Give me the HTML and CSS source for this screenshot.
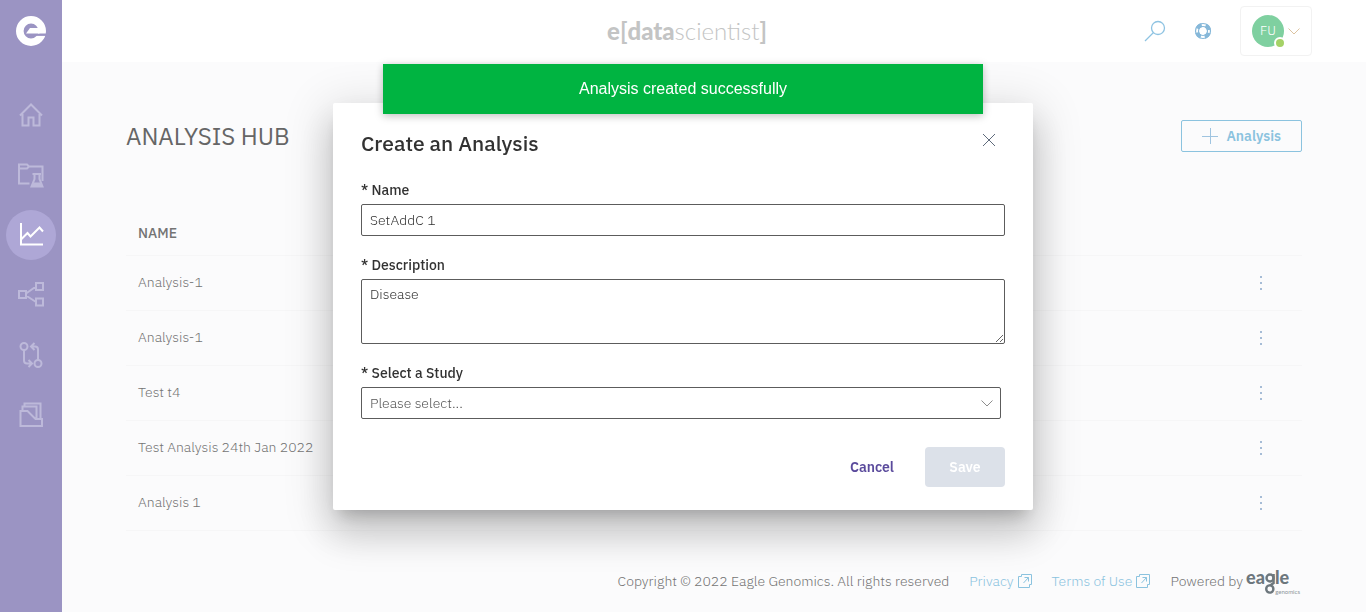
FILE: index.html
```html
<!DOCTYPE html>
<html lang="en">
<head>
<meta charset="utf-8">
<meta name="viewport" content="width=device-width, initial-scale=1">
<title>Analysis Hub</title>
<link rel="stylesheet" href="styles.css">
</head>
<body>
<div class="app">
  <nav class="sidebar" aria-label="Main">
    <a class="brand" href="#" aria-label="Home page">
      <svg width="30" height="30" viewBox="0 0 30 30"><circle cx="15" cy="15" r="11.2" fill="none" stroke="#fff" stroke-width="7.600"/><path d="M10 17.500h21v2.400H10z" fill="#9b94c3"/><path d="M14 12h9.500v5.600H10z" fill="#fff"/></svg>
    </a>
    <ul class="nav-list">
      <li><a class="nav-item" href="#" aria-label="Home"><svg width="26" height="26" viewBox="0 0 26 26"><path d="M2 13.500 13 2.500l11 11M4.500 12v11.500h6V15.500h5v8h6V12"/></svg></a></li>
      <li><a class="nav-item" href="#" aria-label="Studies"><svg width="26" height="26" viewBox="0 0 26 26"><path d="M11.500 21.500H1V2.500h8l2 2h13.500V19M1 6.500h8l2-2"/><path d="M14.500 12h8.500M16.500 12v5l-3 7.500h11l-3-7.500v-5"/><path d="M15.500 20.500h7l1.500 4H14z" fill="currentColor" stroke="none"/></svg></a></li>
      <li><a class="nav-item active" href="#" aria-label="Analyses" aria-current="page"><svg width="26" height="26" viewBox="0 0 26 26"><path d="M3 1v21.500h22M3.500 17l6-6 3 3.500 9-9 3.500 4"/></svg></a></li>
      <li><a class="nav-item" href="#" aria-label="Networks"><svg width="26" height="26" viewBox="0 0 26 26"><path d="M1 9h7v7H1zM18 1h7v7h-7zM18 16.500h7v7h-7zM8 11.500l10-7M8 13.500l10 6.500"/></svg></a></li>
      <li><a class="nav-item" href="#" aria-label="Workflows"><svg width="26" height="26" viewBox="0 0 26 26"><circle cx="6" cy="4.500" r="3.500"/><circle cx="20" cy="21.500" r="3.500"/><path d="M6 8v10.500q0 3 3 3h4M10.500 18l3.500 3.500-3.500 3.500M20 18V7.500q0-3-3-3h-4M16.500 1 13 4.500 16.500 8"/></svg></a></li>
      <li><a class="nav-item" href="#" aria-label="Files"><svg width="26" height="26" viewBox="0 0 26 26"><path d="M2.500 9h7l8 8H24v7H2.500zM4.500 9V4.500h14V17M6.500 4V1.500h16V17"/></svg></a></li>
    </ul>
  </nav>

  <div class="page">
    <header class="topbar">
      <p class="product"><b>e</b><span class="bracket">[</span><b>data</b>scientist<span class="bracket">]</span></p>
      <div class="tools">
        <button class="icon-btn" aria-label="Search"><svg width="22" height="22" viewBox="0 0 22 22" fill="none" stroke="#8ec3e2" stroke-width="1.300"><circle cx="14" cy="8" r="6.500"/><path d="M9.500 12.500 1 21"/></svg></button>
        <button class="icon-btn" aria-label="Help"><svg width="18" height="18" viewBox="0 0 18 18" fill="none"><circle cx="9" cy="9" r="6" stroke="#fff" stroke-width="3"/><circle cx="9" cy="9" r="6" stroke="#86b8d9" stroke-width="4" stroke-dasharray="5.400 4.025" stroke-dashoffset="-2"/><circle cx="9" cy="9" r="7.500" stroke="#86b8d9" stroke-width="1.200"/><circle cx="9" cy="9" r="4.500" stroke="#86b8d9" stroke-width="1.200"/></svg></button>
        <button class="account" aria-label="Account FU">
          <span class="avatar">FU<i class="status"></i></span>
          <svg width="12" height="7" viewBox="0 0 12 7" fill="none" stroke="#dcc3a0"><path d="M.5.500 6 6 11.500.500"/></svg>
        </button>
      </div>
    </header>

    <main class="content">
      <div class="title-row">
        <h1>ANALYSIS HUB</h1>
        <button class="add-btn"><svg width="16" height="16" viewBox="0 0 16 16" stroke="#9fc4e0"><path d="M8.500 0v16M0 8.500h16"/></svg>Analysis</button>
      </div>
      <table class="list">
        <thead><tr><th>NAME</th><th aria-label="Actions"></th></tr></thead>
        <tbody>
          <tr><td>Analysis-1</td><td><button class="more" aria-label="More actions"><i></i><i></i><i></i></button></td></tr>
          <tr><td>Analysis-1</td><td><button class="more" aria-label="More actions"><i></i><i></i><i></i></button></td></tr>
          <tr><td>Test t4</td><td><button class="more" aria-label="More actions"><i></i><i></i><i></i></button></td></tr>
          <tr><td>Test Analysis 24th Jan 2022</td><td><button class="more" aria-label="More actions"><i></i><i></i><i></i></button></td></tr>
          <tr><td>Analysis 1</td><td><button class="more" aria-label="More actions"><i></i><i></i><i></i></button></td></tr>
        </tbody>
      </table>
    </main>

    <footer class="footer">
      <span>Copyright © 2022 Eagle Genomics. All rights reserved</span>
      <a href="#">Privacy<svg width="14" height="14" viewBox="0 0 14 14"><path d="M3.500 2.500h-3v11h11v-3M3.500 2.500v-2h10v10h-2M5.500 9l5-5.500M6.500 3.500h4V7.500"/></svg></a>
      <a href="#">Terms of Use<svg width="14" height="14" viewBox="0 0 14 14"><path d="M3.500 2.500h-3v11h11v-3M3.500 2.500v-2h10v10h-2M5.500 9l5-5.500M6.500 3.500h4V7.500"/></svg></a>
      <span class="powered">Powered by <span class="eagle"><b>ea<svg class="eagle-g" width="10" height="22" viewBox="0 0 10 22" fill="none" stroke="#6d777d" stroke-width="2.400"><circle cx="5" cy="6" r="3.500"/><circle cx="4.800" cy="17" r="3.600"/><path d="M8.600 2v9L5 13.500"/></svg>le</b><small>genomics</small></span></span>
    </footer>
  </div>
</div>

<div class="overlay">
  <form class="dialog" role="dialog" aria-modal="true" aria-labelledby="dialog-title">
    <div class="dialog-head">
      <h2 id="dialog-title">Create an Analysis</h2>
      <button class="close" type="button" aria-label="Close"><svg width="14" height="14" viewBox="0 0 14 14" stroke="#5f6b7c"><path d="M1 1l12 12M13 1 1 13"/></svg></button>
    </div>
    <div class="field">
      <label for="name">* Name</label>
      <input id="name" type="text" value="SetAddC 1">
    </div>
    <div class="field">
      <label for="description">* Description</label>
      <textarea id="description">Disease</textarea>
    </div>
    <div class="field">
      <label for="study">* Select a Study</label>
      <div class="select-wrap">
        <select id="study"><option>Please select...</option></select>
        <svg width="12" height="7" viewBox="0 0 12 7" fill="none" stroke="#8d8d8d"><path d="M.5.500 6 6 11.500.500"/></svg>
      </div>
    </div>
    <div class="actions">
      <button class="cancel" type="button">Cancel</button>
      <button class="save" type="submit" disabled>Save</button>
    </div>
  </form>
</div>

<div class="toast" role="status">Analysis created successfully</div>
</body>
</html>
```

FILE: styles.css
```css
*, *::before, *::after { box-sizing: border-box; }

body {
  margin: 0;
  background: #fbfbfc;
  color: #747474;
  font: 14px/20px "IBM Plex Sans", "Noto Sans", sans-serif;
}

button, input, textarea, select { font: inherit; color: inherit; }
button { padding: 0; border: 0; background: none; }
a { color: #8bc3df; text-decoration: none; }
h1, h2, p, ul { margin: 0; padding: 0; }
svg { display: block; flex: none; }

.app { display: flex; min-height: 100vh; }

/* Sidebar */
.sidebar {
  flex: none;
  width: 62px;
  padding-top: 16px;
  background: #9b94c3;
}
.brand { display: flex; justify-content: center; }
.nav-list {
  display: grid;
  gap: 10px;
  justify-items: center;
  margin-top: 44px;
  list-style: none;
}
.nav-item {
  display: grid;
  place-items: center;
  width: 50px;
  height: 50px;
  border-radius: 50%;
  color: #bdb9da;
}
.nav-item svg { fill: none; stroke: currentColor; stroke-width: 2; }
.nav-item.active { background: #aea7d6; color: #fff; }

.page { display: flex; flex: 1; flex-direction: column; min-width: 0; }

/* Top bar */
.topbar {
  display: grid;
  grid-template-columns: 1fr auto 1fr;
  align-items: center;
  height: 62px;
  padding: 0 54px 0 0;
  background: #fff;
}
.product {
  grid-column: 2;
  color: #c3c4c4;
  font: 300 24px/32px Lato, sans-serif;
}
.product b { font-weight: 900; }
.product .bracket { font-weight: 700; }
.tools {
  display: flex;
  align-items: center;
  justify-content: flex-end;
}
.icon-btn { margin-right: 28px; }
.account {
  display: flex;
  gap: 4px;
  align-items: center;
  height: 50px;
  padding: 0 11px;
  border: 1px solid #f2f2f2;
  border-radius: 4px;
}
.avatar {
  position: relative;
  display: grid;
  place-items: center;
  width: 32px;
  height: 32px;
  border-radius: 50%;
  background: #7fd0a0;
  color: #fff;
  font-size: 13px;
  font-weight: 300;
}
.status {
  position: absolute;
  right: -2px;
  bottom: -2px;
  width: 12px;
  height: 12px;
  border: 2px solid #fff;
  border-radius: 50%;
  background: #a5d267;
}

/* Content */
.content { flex: 1; padding: 58px 64px 0; }
.title-row { display: flex; align-items: center; justify-content: space-between; }
h1 { color: #666; font-size: 24px; font-weight: 400; line-height: 32px; }
.add-btn {
  display: flex;
  gap: 8px;
  align-items: center;
  height: 32px;
  padding: 0 20px;
  border: 1px solid #8bc3df;
  border-radius: 2px;
  color: #8bc3df;
  font-weight: 600;
}
.list { width: 100%; margin-top: 58px; border-collapse: collapse; }
.list th { height: 45px; padding: 2px 12px 0; font-weight: 500; text-align: left; }
.list td { height: 55px; padding: 0 12px 2px; font-weight: 300; }
.list tr { border-bottom: 1px solid #f6f6f7; }
.list th:last-child { width: 82px; }
.list td:last-child { padding: 0 40px 0 0; }
.more { display: grid; gap: 4px; width: 2px; margin-left: auto; }
.more i { width: 2px; height: 2px; background: #a6bcd6; }

/* Footer */
.footer {
  display: flex;
  gap: 20px;
  align-items: center;
  justify-content: flex-end;
  padding: 0 66px 20px 0;
  line-height: 22px;
  font-weight: 300;
}
.footer a { display: flex; gap: 4px; align-items: center; }
.footer a svg { fill: none; stroke: currentColor; }
.powered { display: flex; gap: 3px; }
.eagle { display: flex; flex-direction: column; width: 54px; height: 22px; color: #6d777d; }
.eagle b { display: flex; height: 15px; font: 900 18px/15px Lato, sans-serif; }
.eagle-g { margin-top: 2px; }
.eagle small { align-self: flex-end; margin-top: 3px; color: #8f969b; font: 6px/8px Lato, sans-serif; }

/* Dialog */
.overlay {
  position: fixed;
  inset: 0;
  display: grid;
  place-items: center;
}
.dialog {
  width: 700px;
  max-width: 90vw;
  padding: 24px 28px 23px;
  border-radius: 2px;
  background: #fff;
  color: #323232;
  box-shadow: 0 11px 15px -7px rgba(0, 0, 0, .2),
    0 24px 38px 3px rgba(0, 0, 0, .14),
    0 9px 46px 8px rgba(0, 0, 0, .12);
}
.dialog-head { display: flex; justify-content: space-between; margin-bottom: 21px; }
h2 { font-size: 21px; font-weight: 500; line-height: 32px; }
.close { display: grid; place-items: center; width: 32px; height: 26px; }
.field { display: flex; flex-direction: column; margin-bottom: 19px; }
.field label { line-height: 20px; margin-bottom: 4px; font-weight: 500; }
.field input, .field textarea, .field select {
  display: block;
  width: 100%;
  height: 32px;
  margin: 0;
  padding: 0 8px;
  border: 1px solid #5c5c5c;
  border-radius: 2px;
  outline: 0;
  background: #fff;
  color: #323232;
  font-weight: 300;
}
.field textarea { height: 65px; padding: 4px 8px; resize: vertical; }
.select-wrap { position: relative; margin-right: 4px; }
.field select { appearance: none; color: #555; }
.select-wrap svg { position: absolute; top: 13px; right: 8px; pointer-events: none; }
.actions { display: flex; justify-content: flex-end; padding-top: 9px; }
.actions button { height: 40px; border-radius: 4px; font-weight: 600; }
.cancel { padding: 0 31px; color: #5a4a9c; }
.save { width: 80px; }
.actions .save { background: #dce1e9; color: #fff; }

.toast {
  position: fixed;
  top: 64px;
  left: 50%;
  width: 600px;
  max-width: 80vw;
  transform: translateX(-50%);
  background: #00b441;
  color: #fff;
  font: 16px/50px "Liberation Sans", Arial, sans-serif;
  text-align: center;
  box-shadow: 0 2px 8px rgba(0, 0, 0, .25);
}
```
